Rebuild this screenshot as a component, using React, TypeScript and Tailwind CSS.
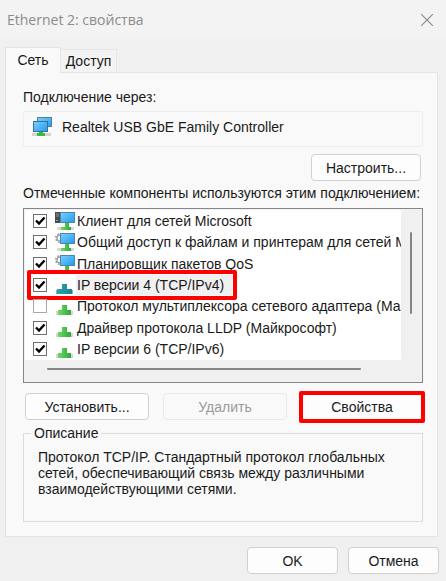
import React, { useState } from 'react';

type IconKind = 'client' | 'service' | 'protocol';

type NetComponent = {
  id: string;
  name: string;
  icon: IconKind;
  checked: boolean;
};

const initialComponents: NetComponent[] = [
  { id: 'client', name: 'Клиент для сетей Microsoft', icon: 'client', checked: true },
  { id: 'share', name: 'Общий доступ к файлам и принтерам для сетей Microsoft', icon: 'service', checked: true },
  { id: 'qos', name: 'Планировщик пакетов QoS', icon: 'service', checked: true },
  { id: 'ipv4', name: 'IP версии 4 (TCP/IPv4)', icon: 'protocol', checked: true },
  { id: 'mux', name: 'Протокол мультиплексора сетевого адаптера (Майкрософт)', icon: 'protocol', checked: false },
  { id: 'lldp', name: 'Драйвер протокола LLDP (Майкрософт)', icon: 'protocol', checked: true },
  { id: 'ipv6', name: 'IP версии 6 (TCP/IPv6)', icon: 'protocol', checked: true },
];

const Gradients = () => (
  <svg width="0" height="0" className="absolute" aria-hidden="true">
    <defs>
      <linearGradient id="screen" x1="0" y1="0" x2="1" y2="1">
        <stop offset="0" stopColor="#7fd0ff" />
        <stop offset="1" stopColor="#1e9bf0" />
      </linearGradient>
      <linearGradient id="plug" x1="0" y1="0" x2="1" y2="0">
        <stop offset="0" stopColor="#6fd866" />
        <stop offset="1" stopColor="#2fa83a" />
      </linearGradient>
      <linearGradient id="plugActive" x1="0" y1="0" x2="1" y2="0">
        <stop offset="0" stopColor="#2fa5a8" />
        <stop offset="1" stopColor="#1f7f96" />
      </linearGradient>
    </defs>
  </svg>
);

const AdapterIcon = () => (
  <svg width="20" height="20" viewBox="0 0 20 20" aria-hidden="true">
    <rect x="5.5" y="0.5" width="14" height="9" fill="url(#screen)" stroke="#4d7f9f" />
    <rect x="1.5" y="4.5" width="14" height="10" fill="url(#screen)" stroke="#3f6f90" />
    <rect x="0" y="16" width="19" height="3" fill="#d2d2d2" />
    <path d="M7 15h4v1h2v3H5v-3h2z" fill="#3cb93c" />
  </svg>
);

const MonitorIcon = ({ kind }: { kind: IconKind }) => (
  <svg width="20" height="20" viewBox="0 0 20 20" className="block" aria-hidden="true">
    {kind === 'client' ? (
      <>
        <path d="M0 1h6v11H0z" fill="#454b50" />
        <path d="M1 3h3M1 5h3" stroke="#8d969c" />
        <path d="M1 9h2v1H1z" fill="#59d35b" />
      </>
    ) : (
      <>
        <circle cx="5" cy="6" r="3" fill="none" stroke="#a3aaae" strokeWidth="1.5" />
        <circle cx="5" cy="6" r="4.3" fill="none" stroke="#8d959a" strokeWidth="1.4" strokeDasharray="1.7 1.7" />
      </>
    )}
    <rect x="5.5" y="1.5" width="14" height="10" fill="url(#screen)" stroke="#4c87a8" />
    <rect x="2" y="16" width="17" height="3" fill="#d9d9d9" />
    <path d="M10 12h4v4h2v3H6v-3h4z" fill="url(#plug)" />
  </svg>
);

const ProtocolIcon = ({ active }: { active: boolean }) => (
  <svg width="20" height="20" viewBox="0 0 20 20" className="block" aria-hidden="true">
    <rect x="1" y="15" width="17" height="4" fill={active ? '#7fb4c0' : '#d6d6d6'} />
    {active ? (
      <path d="M7 9h5v5h5v5H2v-5h5z" fill="url(#plugActive)" />
    ) : (
      <path d="M7 9h5v5h4v5H3v-5h4z" fill="url(#plug)" />
    )}
  </svg>
);

const buttonStyle =
  'h-[27px] rounded border border-[#d0d0d0] bg-[#fdfdfd] text-center disabled:border-[#e9e9e9] disabled:bg-[#f9f9f9] disabled:text-[#9a9a9a]';

const App = () => {
  const [items, setItems] = useState(initialComponents);
  const [selected, setSelected] = useState('ipv4');

  const toggle = (id: string) => {
    setItems(items.map((item) => (item.id === id ? { ...item, checked: !item.checked } : item)));
  };

  return (
    <div className="min-h-screen w-full bg-[#f0f0f0] text-[14px] leading-4 text-[#1a1a1a] font-['Liberation_Sans',Arial,sans-serif]">
      <Gradients />
      <header className="flex h-[39px] items-center justify-between bg-[#f3f3f3] pr-3 pl-[7px]">
        <h1 className="text-[14px] text-[#8c8c8c] font-['Open_Sans','Noto_Sans',sans-serif]">Ethernet 2: свойства</h1>
        <button aria-label="Закрыть" className="p-px">
          <svg width="12" height="12" viewBox="0 0 12 12" className="block" aria-hidden="true">
            <path d="M0 0l12 12M12 0L0 12" stroke="#888" strokeWidth="1.1" />
          </svg>
        </button>
      </header>

      <main className="pt-2 pr-2 pl-[5px]">
        <div role="tablist" className="flex items-end">
          <button
            role="tab"
            aria-selected="true"
            className="relative z-10 -mb-px h-[26px] w-14 border border-b-0 border-[#e5e5e5] bg-[#f9f9f9] pb-px"
          >
            Сеть
          </button>
          <button
            role="tab"
            aria-selected="false"
            className="h-[23px] w-14 border border-b-0 border-l-0 border-[#e5e5e5] bg-[#f3f3f3]"
          >
            Доступ
          </button>
        </div>

        <section className="border border-[#e5e5e5] bg-[#f9f9f9] pt-4 pr-[14px] pb-[14px] pl-[17px]">
          <p>Подключение через:</p>
          <div className="mt-[6px] flex h-9 items-center gap-[10px] rounded-xs border border-[#eeeeee] pb-1 pl-2">
            <AdapterIcon />
            <span>Realtek USB GbE Family Controller</span>
          </div>
          <div className="mt-[7px] flex justify-end pr-[2px]">
            <button className={`${buttonStyle} w-[110px]`}>Настроить...</button>
          </div>

          <p className="mt-1 whitespace-nowrap">Отмеченные компоненты используются этим подключением:</p>
          <div className="mt-[7px] border border-[#828790] bg-[#f0f0f0] p-px">
            <div className="flex">
              <ul className="grid h-[150px] min-w-0 flex-1 auto-rows-fr rounded-br-xs bg-white">
                {items.map((item) => (
                  <li key={item.id} className="relative flex min-w-0 items-center pl-2" onClick={() => setSelected(item.id)}>
                    <span className="grid shrink-0">
                      <input
                        id={item.id}
                        type="checkbox"
                        checked={item.checked}
                        onChange={() => toggle(item.id)}
                        className="peer col-start-1 row-start-1 size-[14px] appearance-none border border-[#6f6f6f] bg-white not-checked:border-[#a8a8a8]"
                      />
                      <svg
                        width="14"
                        height="14"
                        viewBox="0 0 14 14"
                        className="pointer-events-none invisible col-start-1 row-start-1 peer-checked:visible"
                        aria-hidden="true"
                      >
                        <path d="M3 6.5l3 3 5.5-6" fill="none" stroke="#000" strokeWidth="2.4" />
                      </svg>
                    </span>
                    <span className="ml-2 shrink-0">
                      {item.icon === 'protocol' ? (
                        <ProtocolIcon active={item.id === selected} />
                      ) : (
                        <MonitorIcon kind={item.icon} />
                      )}
                    </span>
                    <label
                      htmlFor={item.id}
                      className={`ml-px overflow-hidden pl-px leading-5 text-clip whitespace-nowrap ${item.id === selected ? 'bg-[#f0f0f0] pr-2' : ''}`}
                    >
                      {item.name}
                    </label>
                    {item.id === 'ipv4' && (
                      <span className="pointer-events-none absolute -top-1 -bottom-1 left-[2px] w-[210px] rounded-xs border-4 border-[#fe0000]" />
                    )}
                  </li>
                ))}
              </ul>
              <div className="w-5 pt-[22px] pl-[9px]">
                <div className="h-[82px] w-[2px] rounded bg-[#868686]" />
              </div>
            </div>
            <div className="h-[21px] pt-[8px] pr-[60px] pl-[22px]">
              <div className="h-[2px] rounded bg-[#868686]" />
            </div>
          </div>

          <div className="mt-[10px] flex gap-[14px] pl-[2px]">
            <button className={`${buttonStyle} flex-1`}>Установить...</button>
            <button className={`${buttonStyle} flex-1`} disabled>
              Удалить
            </button>
            <div className="relative flex flex-1">
              <button className={`${buttonStyle} flex-1`}>Свойства</button>
              <span className="pointer-events-none absolute -inset-x-[2px] -top-[2px] -bottom-[3px] rounded-xs border-4 border-[#fe0000]" />
            </div>
          </div>

          <fieldset className="mt-[5px] h-[97px] border border-[#dcdcdc] pl-[14px]">
            <legend className="-ml-[7px] px-[3px]">Описание</legend>
            <p className="max-w-[360px] pt-2">
              Протокол TCP/IP. Стандартный протокол глобальных сетей, обеспечивающий связь между различными
              взаимодействующими сетями.
            </p>
          </fieldset>
        </section>
      </main>

      <footer className="flex justify-end gap-[10px] pt-[10px] pr-[7px] pb-2">
        <button className={`${buttonStyle} w-[91px]`}>OK</button>
        <button className={`${buttonStyle} w-[91px]`}>Отмена</button>
      </footer>
    </div>
  );
};

export default App;
